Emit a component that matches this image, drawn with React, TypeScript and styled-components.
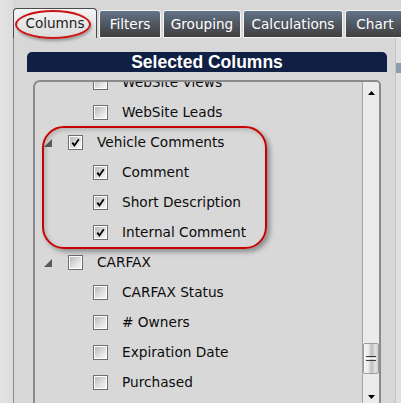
import React from 'react';
import styled, { createGlobalStyle } from 'styled-components';

const Global = createGlobalStyle`
  html, body { margin: 0; padding: 0; }
  body {
    width: 401px; height: 403px; overflow: hidden;
    background: #d7d7d7;
    font-family: "DejaVu Sans", Verdana, sans-serif;
  }
`;

const Page = styled.div`
  position: relative;
  display: flex;
  width: 401px;
  height: 403px;
  overflow: hidden;
`;

const Gutter = styled.div`
  width: 13px;
  flex: none;
  background: linear-gradient(90deg, #e4e4e4, #dcdcdc);
`;

const Main = styled.div`
  flex: 1;
  min-width: 0;
  display: flex;
  flex-direction: column;
  padding-top: 8px;
`;

const TabBar = styled.div`
  display: flex;
  align-items: flex-end;
  gap: 2px;
  height: 30px;
  flex: none;
  white-space: nowrap;
`;

const Tab = styled.div<{ $active?: boolean; $w: number }>`
  box-sizing: border-box;
  flex: none;
  width: ${p => p.$w}px;
  display: flex;
  align-items: center;
  justify-content: center;
  font-size: 13.6px;
  ${p => p.$active ? `
    height: 30px;
    border: 1px solid #4a4a4a;
    border-bottom: none;
    border-radius: 4px 4px 0 0;
    background: linear-gradient(#f5f5f5, #e6e6e6 55%, #d9d9d9);
    color: #1c1c1c;
    padding-bottom: 2px;
  ` : `
    height: 28px;
    border: 1px solid #f3f3f3;
    border-radius: 3px 3px 0 0;
    background: linear-gradient(#63748a, #525a64 45%, #404040);
    color: #ffffff;
  `}
`;

const Body = styled.div`
  flex: 1;
  display: flex;
  border-left: 1px solid #7d8fa0;
  background: #d7d7d7;
  min-height: 0;
`;

const Column = styled.div`
  flex: none;
  width: 360px;
  margin-left: 13px;
  padding-top: 14px;
  display: flex;
  flex-direction: column;
  gap: 8px;
`;

const Header = styled.div`
  height: 20px;
  flex: none;
  background: #0f2044;
  border-radius: 5px 5px 0 0;
  color: #fff;
  font-family: "Liberation Sans", Arial, sans-serif;
  font-weight: bold;
  font-size: 17.5px;
  line-height: 20px;
  text-align: center;
`;

const ListBox = styled.div`
  box-sizing: border-box;
  margin-left: 6px;
  width: 348px;
  height: 330px;
  flex: none;
  display: flex;
  border: 2px solid #8a8a8a;
  border-radius: 7px 5px 0 0;
  background: #d8d8d8;
  overflow: hidden;
`;

const Viewport = styled.div`
  flex: 1;
  min-width: 0;
  overflow: hidden;
`;

const Rows = styled.div<{ $scroll: number }>`
  margin-top: ${p => -p.$scroll}px;
  display: flex;
  flex-direction: column;
`;

const Row = styled.div<{ $level: number }>`
  height: 30px;
  display: flex;
  align-items: center;
  padding-left: ${p => 9 + p.$level * 49}px;
  font-size: 13.7px;
  color: #0c0c0c;
  white-space: nowrap;
`;

const Expander = styled.svg`
  width: 8px;
  height: 8px;
  flex: none;
  margin-right: 16px;
  margin-top: 2px;
`;

const Box = styled.span`
  box-sizing: border-box;
  width: 15px;
  height: 15px;
  flex: none;
  margin-right: 14px;
  border: 1px solid #6f6f6f;
  background: linear-gradient(135deg, #b2b2b2 0%, #dcdcdc 50%, #fbfbfb 100%);
  box-shadow: inset 0 0 0 1px #ffffff;
  display: flex;
  align-items: center;
  justify-content: center;
`;

const Scrollbar = styled.div`
  width: 17px;
  flex: none;
  display: flex;
  flex-direction: column;
  background: #ebebeb;
  border-left: 1px solid #a4a4a4;
  box-sizing: border-box;
`;

const ArrowButton = styled.div`
  height: 22px;
  flex: none;
  display: flex;
  align-items: center;
  justify-content: center;
`;

const Track = styled.div`
  flex: 1;
  display: flex;
  flex-direction: column;
`;

const Thumb = styled.div<{ $top: number }>`
  margin-top: ${p => p.$top}px;
  height: 31px;
  box-sizing: border-box;
  border: 1px solid #9c9c9c;
  border-radius: 2px;
  background: linear-gradient(90deg, #f6f6f6 0%, #ececec 30%, #bdbdbd 55%, #e2e2e2 80%, #d0d0d0 100%);
  display: flex;
  flex-direction: column;
  align-items: center;
  justify-content: center;
  gap: 1px;
`;

const Grip = styled.span<{ $c: string }>`
  width: 10px;
  height: 1px;
  background: ${p => p.$c};
`;

const SideStub = styled.div`
  margin-left: auto;
  width: 5px;
  display: flex;
  flex-direction: column;
  padding-top: 25px;
  background: #e0e0e0;
  border-left: 1px solid #c4c4c4;
`;

const StubHead = styled.div`
  height: 10px;
  background: #8b9bb0;
`;

const Ellipse = styled.div`
  position: absolute;
  left: 15px;
  top: 10px;
  width: 76px;
  height: 29px;
  box-sizing: border-box;
  border: 2px solid #cc1515;
  border-radius: 50%;
  box-shadow: 1px 2px 3px rgba(0, 0, 0, 0.3);
  pointer-events: none;
`;

const Callout = styled.div`
  position: absolute;
  left: 42px;
  top: 126px;
  width: 225px;
  height: 123px;
  box-sizing: border-box;
  border: 2px solid #c80000;
  border-radius: 22px;
  box-shadow: 3px 3px 5px rgba(0, 0, 0, 0.35), inset 2px 2px 4px rgba(0, 0, 0, 0.18);
  pointer-events: none;
`;

type Item = { label: string; level: number; checked?: boolean; group?: boolean };

const items: Item[] = [
  { label: 'WebSite Views', level: 1 },
  { label: 'WebSite Leads', level: 1 },
  { label: 'Vehicle Comments', level: 0, checked: true, group: true },
  { label: 'Comment', level: 1, checked: true },
  { label: 'Short Description', level: 1, checked: true },
  { label: 'Internal Comment', level: 1, checked: true },
  { label: 'CARFAX', level: 0, group: true },
  { label: 'CARFAX Status', level: 1 },
  { label: '# Owners', level: 1 },
  { label: 'Expiration Date', level: 1 },
  { label: 'Purchased', level: 1 },
];

const tabs = [
  { label: 'Columns', w: 84, active: true },
  { label: 'Filters', w: 62 },
  { label: 'Grouping', w: 78 },
  { label: 'Calculations', w: 100 },
  { label: 'Chart', w: 60 },
];

const Check = () => (
  <svg width="9" height="9" viewBox="0 0 9 9">
    <path d="M1.3 4.6 L3.4 7.4 L7.8 1.2" fill="none" stroke="#000" strokeWidth="1.8" />
  </svg>
);

export default function App() {
  return (
    <>
      <Global />
      <Page>
        <Gutter />
        <Main>
          <TabBar>
            {tabs.map(t => (
              <Tab key={t.label} $active={t.active} $w={t.w}>{t.label}</Tab>
            ))}
          </TabBar>
          <Body>
            <Column>
              <Header>Selected Columns</Header>
              <ListBox>
                <Viewport>
                  <Rows $scroll={15}>
                    {items.map(it => (
                      <Row key={it.label} $level={it.level}>
                        {it.group && (
                          <Expander viewBox="0 0 8 8">
                            <polygon points="8,0 8,8 0,8" fill="#5a5a5a" />
                          </Expander>
                        )}
                        <Box>{it.checked && <Check />}</Box>
                        {it.label}
                      </Row>
                    ))}
                  </Rows>
                </Viewport>
                <Scrollbar>
                  <ArrowButton>
                    <svg width="7" height="4" viewBox="0 0 7 4"><polygon points="3.5,0 7,4 0,4" fill="#000" /></svg>
                  </ArrowButton>
                  <Track>
                    <Thumb $top={239}>
                      <Grip $c="#3a3a3a" />
                      <Grip $c="#ffffff" />
                      <Grip $c="#3a3a3a" />
                    </Thumb>
                  </Track>
                  <ArrowButton>
                    <svg width="7" height="4" viewBox="0 0 7 4"><polygon points="0,0 7,0 3.5,4" fill="#000" /></svg>
                  </ArrowButton>
                </Scrollbar>
              </ListBox>
            </Column>
            <SideStub>
              <StubHead />
            </SideStub>
          </Body>
        </Main>
        <Ellipse />
        <Callout />
      </Page>
    </>
  );
}
